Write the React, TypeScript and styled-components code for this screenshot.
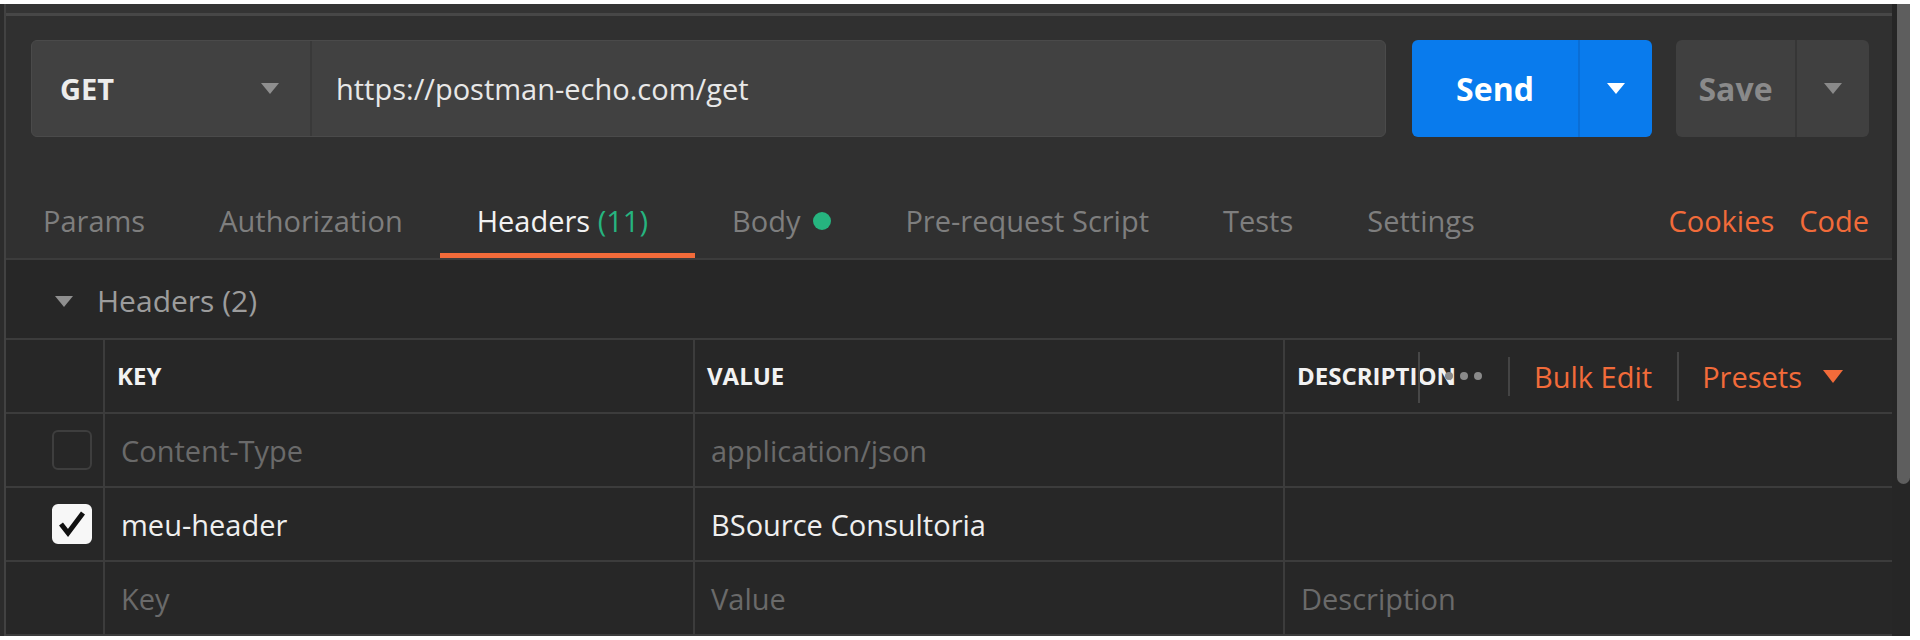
import React from "react";
import styled, { createGlobalStyle } from "styled-components";

const GlobalStyle = createGlobalStyle`
  html, body { margin: 0; padding: 0; background: #ffffff; }
  body { font-family: "Open Sans", "Noto Sans", sans-serif; }
  * { box-sizing: border-box; }
`;

const ORANGE = "#f26b3a";
const GREEN = "#26b47f";
const LINE = "#3c3c3c";

const Frame = styled.div`
  display: flex;
  width: 1910px;
  height: 632px;
  margin-top: 4px;
  overflow: hidden;
`;

const LeftEdge = styled.div`
  width: 4px;
  background: #2c2c2c;
`;

const Main = styled.div`
  flex: 1;
  display: flex;
  flex-direction: column;
  border-left: 2px solid #424242;
  background: #272727;
  min-width: 0;
`;

const ScrollTrack = styled.div`
  width: 18px;
  background: #262626;
  padding-left: 5px;
`;

const ScrollThumb = styled.div`
  width: 13px;
  height: 480px;
  background: #5e5e5e;
  border-radius: 0 0 7px 7px;
`;

const Upper = styled.div`
  background: #303030;
  display: flex;
  flex-direction: column;
`;

const TopStrip = styled.div`
  height: 12px;
  background: #343434;
  border-bottom: 3px solid #474747;
`;

const RequestRow = styled.div`
  display: flex;
  padding: 24px 23px 0 25px;
  height: 121px;
`;

const UrlGroup = styled.div`
  flex: 1;
  display: flex;
  height: 97px;
  background: #414141;
  border: 1px solid #4a4a4a;
  border-radius: 6px;
  margin-right: 26px;
`;

const MethodSelect = styled.div`
  width: 280px;
  display: flex;
  align-items: center;
  justify-content: space-between;
  padding: 0 31px 0 28px;
  border-right: 2px solid #393939;
  font-size: 29px;
  font-weight: 700;
  color: #ececec;
`;

const UrlText = styled.div`
  display: flex;
  align-items: center;
  padding-left: 24px;
  font-size: 29px;
  color: #e8e8e8;
`;

const SplitButton = styled.div<{ $primary?: boolean }>`
  display: flex;
  height: 97px;
  border-radius: 6px;
  overflow: hidden;
  background: ${(p) => (p.$primary ? "#097bed" : "#404040")};
  color: ${(p) => (p.$primary ? "#ffffff" : "#8a8a8a")};
  margin-right: ${(p) => (p.$primary ? "24px" : "0")};
`;

const ButtonMain = styled.div<{ $w: number }>`
  width: ${(p) => p.$w}px;
  display: flex;
  align-items: center;
  justify-content: center;
  font-size: 32px;
  font-weight: 700;
`;

const ButtonDrop = styled.div<{ $primary?: boolean }>`
  width: 74px;
  display: flex;
  align-items: center;
  justify-content: center;
  border-left: 2px solid ${(p) => (p.$primary ? "#0a6ed6" : "#363636")};
`;

const TabsBar = styled.div`
  display: flex;
  height: 78px;
  margin-top: 45px;
  border-bottom: 2px solid ${LINE};
`;

const Tab = styled.div<{ $active?: boolean }>`
  position: relative;
  display: flex;
  align-items: center;
  gap: 13px;
  padding: 0 ${(p) => (p.$active ? "47px" : "37px")} 0 37px;
  font-size: 29px;
  line-height: 1;
  color: ${(p) => (p.$active ? "#f2f2f2" : "#7e7e7e")};
  white-space: nowrap;
  &::after {
    content: "";
    display: ${(p) => (p.$active ? "block" : "none")};
    position: absolute;
    left: 0;
    right: 0;
    bottom: 0;
    height: 5px;
    background: ${ORANGE};
  }
`;

const Count = styled.span`
  color: ${GREEN};
`;

const Dot = styled.span`
  width: 18px;
  height: 18px;
  border-radius: 50%;
  background: ${GREEN};
  margin-top: 2px;
`;

const TabSpacer = styled.div`
  flex: 1;
`;

const TabLinks = styled.div`
  display: flex;
  align-items: center;
  gap: 25px;
  padding-right: 23px;
  font-size: 29px;
  line-height: 1;
  color: ${ORANGE};
`;

const SectionTitle = styled.div`
  height: 78px;
  padding: 4px 0 0 49px;
  display: flex;
  align-items: center;
  gap: 24px;
  font-size: 30px;
  line-height: 1;
  color: #9c9c9c;
`;

const Table = styled.div`
  border-top: 2px solid ${LINE};
`;

const Row = styled.div`
  display: grid;
  grid-template-columns: 99px 590px 590px 1fr;
  height: 74px;
  border-bottom: 2px solid ${LINE};
`;

const Cell = styled.div<{ $last?: boolean; $tone?: "head" | "dim" | "text" }>`
  position: relative;
  display: flex;
  align-items: center;
  padding-left: ${(p) => (p.$tone === "head" ? "12px" : "16px")};
  border-right: ${(p) => (p.$last ? "none" : `2px solid ${LINE}`)};
  font-size: ${(p) => (p.$tone === "head" ? "24px" : "29px")};
  font-weight: ${(p) => (p.$tone === "head" ? 700 : 400)};
  line-height: 1;
  white-space: nowrap;
  color: ${(p) =>
    p.$tone === "head" ? "#f2f2f2" : p.$tone === "dim" ? "#6a6a6a" : "#efefef"};
`;

const CheckCell = styled.div`
  display: flex;
  align-items: center;
  padding-left: 46px;
  border-right: 2px solid ${LINE};
`;

const Checkbox = styled.div<{ $checked?: boolean }>`
  width: 40px;
  height: 40px;
  border-radius: 6px;
  display: flex;
  align-items: center;
  justify-content: center;
  background: ${(p) => (p.$checked ? "#f7f7f7" : "transparent")};
  border: 2px solid ${(p) => (p.$checked ? "#f7f7f7" : "#3e3e3e")};
`;

const ResizeHandle = styled.div`
  position: absolute;
  left: 133px;
  top: 12px;
  width: 2px;
  height: 51px;
  background: #474747;
`;

const HeaderActions = styled.div`
  position: absolute;
  left: 160px;
  top: 0;
  bottom: 0;
  display: flex;
  align-items: center;
  font-size: 29px;
  font-weight: 400;
  color: ${ORANGE};
`;

const Dots = styled.div`
  display: flex;
  gap: 6.5px;
  margin-right: 26px;
`;

const DotGrey = styled.span`
  width: 8px;
  height: 8px;
  border-radius: 50%;
  background: #8a8a8a;
`;

const Divider = styled.span<{ $h: number }>`
  width: 2px;
  height: ${(p) => p.$h}px;
  background: #444444;
`;

const ActionLink = styled.span<{ $ml: number }>`
  margin-left: ${(p) => p.$ml}px;
  margin-right: 25px;
  display: flex;
  align-items: center;
  gap: 21px;
`;

const Caret = ({ color, w = 18, h = 11 }: { color: string; w?: number; h?: number }) => (
  <svg width={w} height={h} viewBox={`0 0 ${w} ${h}`}>
    <polygon points={`0,0 ${w},0 ${w / 2},${h}`} fill={color} />
  </svg>
);

const CheckMark = () => (
  <svg width="32" height="32" viewBox="0 0 32 32">
    <path
      d="M5 16 L12 25 L27 5"
      fill="none"
      stroke="#111"
      strokeWidth="5"
      strokeLinejoin="miter"
      strokeLinecap="butt"
    />
  </svg>
);

export default function App() {
  return (
    <>
      <GlobalStyle />
      <Frame>
        <LeftEdge />
        <Main>
          <Upper>
            <TopStrip />
            <RequestRow>
              <UrlGroup>
                <MethodSelect>
                  GET
                  <Caret color="#8f8f8f" />
                </MethodSelect>
                <UrlText>https://postman-echo.com/get</UrlText>
              </UrlGroup>
              <SplitButton $primary>
                <ButtonMain $w={166}>Send</ButtonMain>
                <ButtonDrop $primary>
                  <Caret color="#ffffff" />
                </ButtonDrop>
              </SplitButton>
              <SplitButton>
                <ButtonMain $w={119}>Save</ButtonMain>
                <ButtonDrop>
                  <Caret color="#8a8a8a" />
                </ButtonDrop>
              </SplitButton>
            </RequestRow>
            <TabsBar>
              <Tab>Params</Tab>
              <Tab>Authorization</Tab>
              <Tab $active>
                <span>
                  Headers <Count>(11)</Count>
                </span>
              </Tab>
              <Tab>
                Body
                <Dot />
              </Tab>
              <Tab>Pre-request Script</Tab>
              <Tab>Tests</Tab>
              <Tab>Settings</Tab>
              <TabSpacer />
              <TabLinks>
                <span>Cookies</span>
                <span>Code</span>
              </TabLinks>
            </TabsBar>
          </Upper>
          <SectionTitle>
            <Caret color="#8f8f8f" />
            Headers (2)
          </SectionTitle>
          <Table>
            <Row>
              <CheckCell />
              <Cell $tone="head">KEY</Cell>
              <Cell $tone="head">VALUE</Cell>
              <Cell $tone="head" $last>
                DESCRIPTION
                <ResizeHandle />
                <HeaderActions>
                  <Dots>
                    <DotGrey />
                    <DotGrey />
                    <DotGrey />
                  </Dots>
                  <Divider $h={39} />
                  <ActionLink $ml={24}>Bulk Edit</ActionLink>
                  <Divider $h={49} />
                  <ActionLink $ml={23}>
                    Presets
                    <Caret color={ORANGE} w={20} h={13} />
                  </ActionLink>
                </HeaderActions>
              </Cell>
            </Row>
            <Row>
              <CheckCell>
                <Checkbox />
              </CheckCell>
              <Cell $tone="dim">Content-Type</Cell>
              <Cell $tone="dim">application/json</Cell>
              <Cell $last />
            </Row>
            <Row>
              <CheckCell>
                <Checkbox $checked>
                  <CheckMark />
                </Checkbox>
              </CheckCell>
              <Cell $tone="text">meu-header</Cell>
              <Cell $tone="text">BSource Consultoria</Cell>
              <Cell $last />
            </Row>
            <Row>
              <CheckCell />
              <Cell $tone="dim">Key</Cell>
              <Cell $tone="dim">Value</Cell>
              <Cell $tone="dim" $last>
                Description
              </Cell>
            </Row>
          </Table>
        </Main>
        <ScrollTrack>
          <ScrollThumb />
        </ScrollTrack>
      </Frame>
    </>
  );
}
